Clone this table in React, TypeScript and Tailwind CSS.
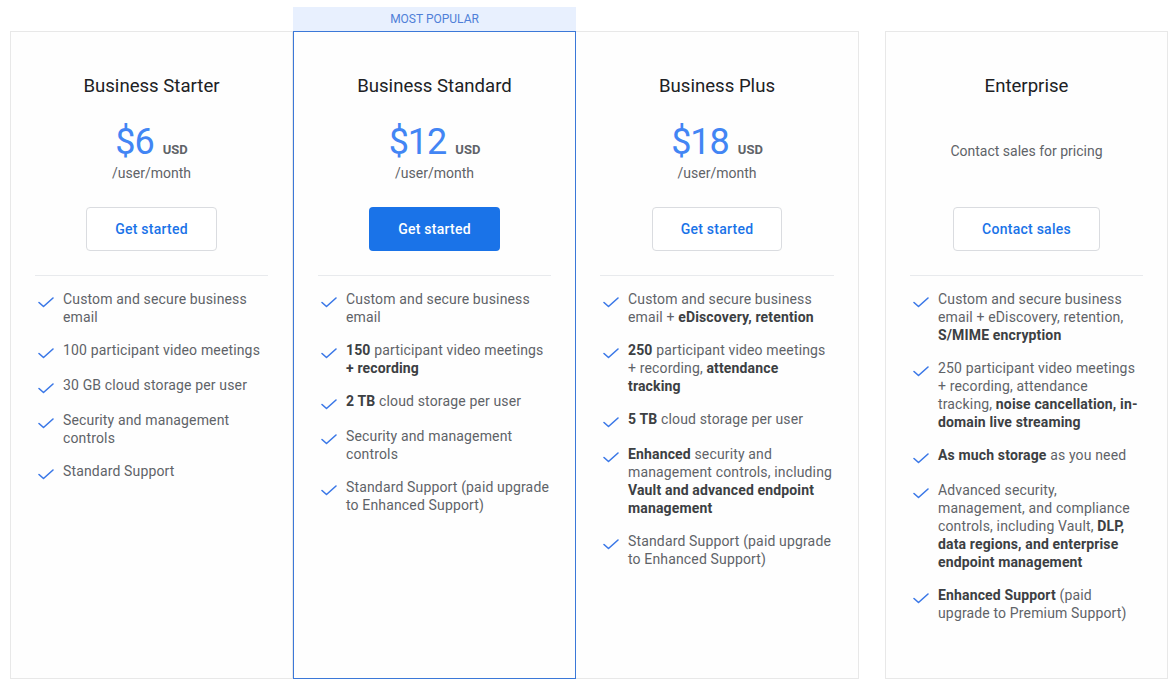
import React from 'react'

type Feature = React.ReactNode

type Plan = {
    name: string
    price?: string
    cta: string
    primary?: boolean
    features: Feature[]
}

const B = ({ children }: { children: React.ReactNode }) => (
    <strong className="font-bold text-[#3c4043]">{children}</strong>
)

const plans: Plan[] = [
    {
        name: 'Business Starter',
        price: '$6',
        cta: 'Get started',
        features: [
            'Custom and secure business email',
            '100 participant video meetings',
            '30 GB cloud storage per user',
            'Security and management controls',
            'Standard Support',
        ],
    },
    {
        name: 'Business Standard',
        price: '$12',
        cta: 'Get started',
        primary: true,
        features: [
            'Custom and secure business email',
            <>
                <B>150</B> participant video meetings <B>+ recording</B>
            </>,
            <>
                <B>2 TB</B> cloud storage per user
            </>,
            'Security and management controls',
            'Standard Support (paid upgrade to Enhanced Support)',
        ],
    },
    {
        name: 'Business Plus',
        price: '$18',
        cta: 'Get started',
        features: [
            <>
                Custom and secure business email + <B>eDiscovery, retention</B>
            </>,
            <>
                <B>250</B> participant video meetings + recording, <B>attendance tracking</B>
            </>,
            <>
                <B>5 TB</B> cloud storage per user
            </>,
            <>
                <B>Enhanced</B> security and management controls, including{' '}
                <B>Vault and advanced endpoint management</B>
            </>,
            'Standard Support (paid upgrade to Enhanced Support)',
        ],
    },
]

const enterprise: Plan = {
    name: 'Enterprise',
    cta: 'Contact sales',
    features: [
        <>
            Custom and secure business email + eDiscovery, retention, <B>S/MIME encryption</B>
        </>,
        <>
            250 participant video meetings + recording, attendance tracking,{' '}
            <B>noise cancellation, in-domain live streaming</B>
        </>,
        <>
            <B>As much storage</B> as you need
        </>,
        <>
            Advanced security, management, and compliance controls, including Vault,{' '}
            <B>DLP, data regions, and enterprise endpoint management</B>
        </>,
        <>
            <B>Enhanced Support</B> (paid upgrade to Premium Support)
        </>,
    ],
}

function Check() {
    return (
        <svg width="20" height="20" viewBox="0 0 20 20" className="shrink-0 ml-[1px]">
            <polyline
                points="3,12.5 7.5,16.5 17,8"
                fill="none"
                stroke="#3b78e7"
                strokeWidth="1.6"
                strokeLinecap="round"
                strokeLinejoin="round"
            />
        </svg>
    )
}

function Card({ plan, className = '' }: { plan: Plan; className?: string }) {
    return (
        <div className={`w-[283px] h-[648px] bg-[#fefefe] px-[24px] pt-[41px] ${className}`}>
            {/* header */}
            <h2 className="text-center text-[18.6px] leading-[26px] text-[#202124]">{plan.name}</h2>

            <div className="h-[84px] text-center">
                {plan.price ? (
                    <div className="pt-[23px]">
                        <div className="flex items-baseline justify-center h-[40px] leading-[40px]">
                            <span className="text-[36px] text-[#4285f4] tracking-[-1px]">{plan.price}</span>
                            <span className="ml-[9px] text-[13px] font-bold text-[#5f6368]">USD</span>
                        </div>
                        <div className="text-[14px] leading-[20px] text-[#5f6368] mt-[1px]">/user/month</div>
                    </div>
                ) : (
                    <div className="pt-[42px] text-[14px] leading-[20px] text-[#5f6368]">
                        Contact sales for pricing
                    </div>
                )}
            </div>

            <div className="flex justify-center mt-[24px]">
                <button
                    className={
                        plan.primary
                            ? 'h-[44px] px-[29px] rounded-[4px] bg-[#1a73e8] text-white text-[14px] font-medium tracking-[0.25px]'
                            : 'h-[44px] px-[28px] rounded-[4px] border border-[#dadce0] bg-white text-[#1a73e8] text-[14px] font-medium tracking-[0.25px]'
                    }
                >
                    {plan.cta}
                </button>
            </div>

            <div className="mt-[24px] border-t border-[#e8eaed] pt-[14px]">
                <ul className="flex flex-col gap-[15px]">
                    {plan.features.map((f, i) => (
                        <li key={i} className="flex gap-[7px] text-[14px] leading-[18px] tracking-[0.15px] text-[#5f6368]">
                            <Check />
                            <span className="w-[206px]">{f}</span>
                        </li>
                    ))}
                </ul>
            </div>
        </div>
    )
}

export default function App() {
    return (
        <div className="min-h-screen bg-white pl-[10px] pt-[7px] font-['Roboto',_'Liberation_Sans',_sans-serif]">
            <div className="flex">
                <div className="flex">
                    <div className="pt-[24px]">
                        <Card plan={plans[0]} className="border border-[#e8e8e8]" />
                    </div>
                    <div className="flex flex-col">
                        <div className="h-[24px] bg-[#e8f0fe] text-[#4f7fd8] text-[12px] leading-[24px] text-center uppercase">
                            Most popular
                        </div>
                        <Card plan={plans[1]} className="border border-[#3b78d8]" />
                    </div>
                    <div className="pt-[24px]">
                        <Card plan={plans[2]} className="border border-l-0 border-[#e8e8e8]" />
                    </div>
                </div>
                <div className="pt-[24px] ml-[26px]">
                    <Card plan={enterprise} className="border border-[#e8e8e8]" />
                </div>
            </div>
        </div>
    )
}
